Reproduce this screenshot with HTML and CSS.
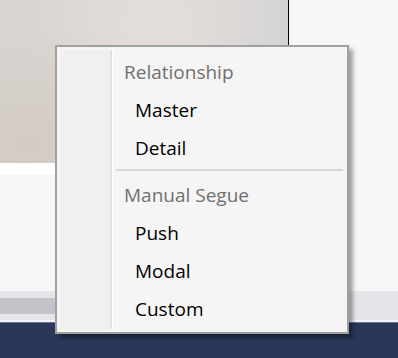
FILE: index.html
```html
<!DOCTYPE html>
<html lang="en">
<head>
    <meta charset="UTF-8">
    <meta name="viewport" content="width=device-width, initial-scale=1.0">
    <title>Segue Menu</title>
    <link rel="stylesheet" href="styles.css">
</head>
<body>
    <div class="screen">
        <div class="workspace">
            <div class="canvas-col">
                <div class="preview"></div>
                <div class="preview-foot"></div>
            </div>
            <div class="side"></div>
        </div>

        <div class="scrollbar">
            <div class="scroll-thumb"></div>
        </div>

        <div class="taskbar"></div>

        <!-- context menu -->
        <div class="menu">
            <div class="menu-body">
                <div class="menu-gutter"></div>
                <ul class="menu-list">
                    <li class="menu-header">Relationship</li>
                    <li class="menu-item">Master</li>
                    <li class="menu-item">Detail</li>
                    <li class="menu-sep"></li>
                    <li class="menu-header">Manual Segue</li>
                    <li class="menu-item">Push</li>
                    <li class="menu-item">Modal</li>
                    <li class="menu-item">Custom</li>
                </ul>
            </div>
        </div>
    </div>
</body>
</html>
```

FILE: styles.css
```css
:root {
    --menu-bg: #f5f5f5;
    --gutter-bg: #f0f0f0;
    --border-color: #a0a0a0;
    --header-color: #707070;
    --text-color: #000;
    --navy: #293858;
}

* {
    margin: 0;
    padding: 0;
    box-sizing: border-box;
}

body {
    font-family: 'Open Sans', 'Noto Sans', sans-serif;
    background-color: #f7f7f7;
}

.screen {
    position: relative;
    width: 398px;
    height: 358px;
    overflow: hidden;
    display: flex;
    flex-direction: column;
}

.workspace {
    display: flex;
    height: 291px;
}

.canvas-col {
    width: 289px;
    display: flex;
    flex-direction: column;
    border-right: 1px solid #000;
}

.preview {
    height: 163px;
    background:
        radial-gradient(ellipse at 55% 15%, #e4dedb 0%, rgba(228,222,219,0) 55%),
        radial-gradient(ellipse at 10% 90%, #d3cbc4 0%, rgba(211,203,196,0) 60%),
        linear-gradient(100deg, #d8d5d1 0%, #dcd8d5 45%, #d3d3d5 100%);
}

.preview-foot {
    height: 12px;
    background-color: #fff;
}

.side {
    flex: 1;
    background-color: #f7f7f7;
}

.scrollbar {
    height: 31px;
    background-color: #e6e6ea;
    padding-top: 7px;
    border-bottom: 2px solid #f4f4f6;
}

.scroll-thumb {
    width: 120px;
    height: 16px;
    background-color: #c3c4c9;
}

.taskbar {
    flex: 1;
    background-color: var(--navy);
    border-top: 1px solid #6474a0;
}

.menu {
    position: absolute;
    left: 55px;
    top: 45px;
    width: 294px;
    border: 2px solid var(--border-color);
    padding: 3px;
    background-color: var(--menu-bg);
    box-shadow: 4px 4px 4px rgba(0,0,0,0.35);
}

.menu-body {
    display: flex;
}

.menu-gutter {
    width: 52px;
    background-color: var(--gutter-bg);
    border-right: 2px solid #e2e2e2;
    box-shadow: 1px 0 0 #fff;
}

.menu-list {
    flex: 1;
    list-style: none;
    padding: 3px 1px 1px 0;
    margin-left: 1px;
    font-size: 19px;
    line-height: 38px;
}

.menu-header {
    color: var(--header-color);
    padding-left: 11px;
}

.menu-item {
    color: var(--text-color);
    padding-left: 22px;
}

.menu-sep {
    height: 2px;
    margin: 2px 0 5px 3px;
    background-color: #d8d8d8;
}
```
